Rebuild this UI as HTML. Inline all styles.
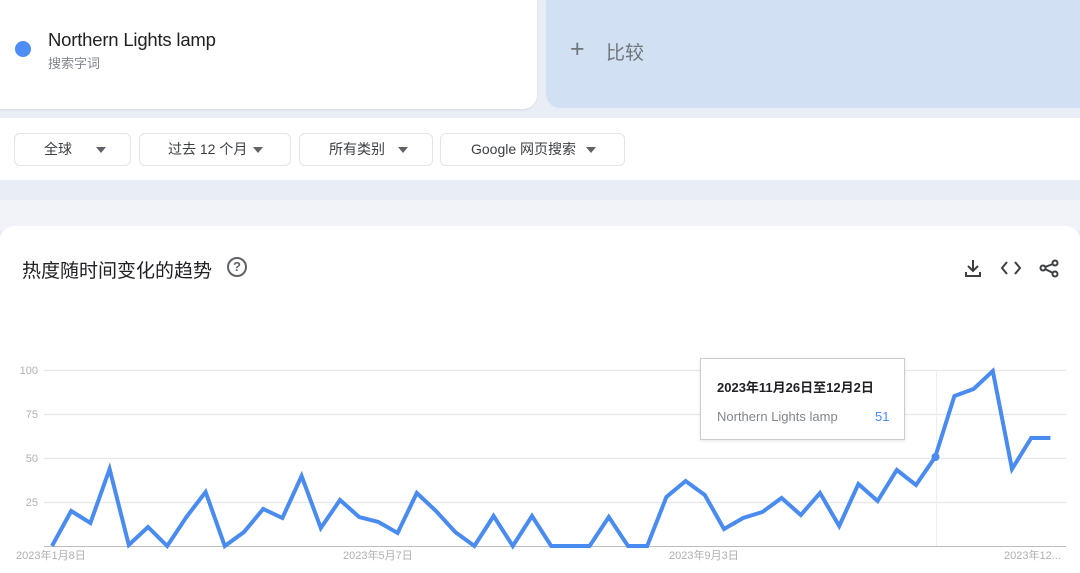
<!DOCTYPE html>
<html><head><meta charset="utf-8"><style>
*{margin:0;padding:0;box-sizing:border-box}
body{width:1080px;height:573px;overflow:hidden;background:#e9edf5;font-family:"Liberation Sans","Noto Sans CJK SC",sans-serif;position:relative}
.abs{position:absolute}
.card1{left:0;top:0;width:537px;height:109px;background:#fff;border-radius:0 0 14px 0;box-shadow:0 1px 2px rgba(0,0,0,.08)}
.cmp{left:546px;top:0;width:534px;height:108px;background:#d2e0f3;border-radius:0 0 0 14px}
.bar{left:0;top:118px;width:1080px;height:62px;background:#fff}
.btn{top:133px;height:33px;border:1px solid #e2e4e8;border-radius:6px;background:#fff;font-size:14px;color:#3c4043;line-height:31px}
.arr{position:absolute;top:13px;width:0;height:0;border-left:5px solid transparent;border-right:5px solid transparent;border-top:6px solid #5f6368}
.band{left:0;top:200px;width:1080px;height:30px;background:#f1f3f8}
.card2{left:0;top:226px;width:1080px;height:347px;background:#fff;border-radius:14px 14px 0 0}
</style></head><body>
<div class="abs card1"></div>
<div class="abs" style="left:15px;top:41px;width:16px;height:16px;border-radius:50%;background:#4e8df5"></div>
<div class="abs" style="left:48px;top:29px;font-size:18.5px;color:#202124;letter-spacing:-0.2px">Northern Lights lamp</div>
<div class="abs" style="left:48px;top:53px;font-size:13px;color:#80868b">搜索字词</div>
<div class="abs cmp"></div>
<div class="abs" style="left:570px;top:35px;font-size:25px;color:#70757a;font-weight:300">+</div>
<div class="abs" style="left:606px;top:38px;font-size:19px;color:#70757a">比较</div>
<div class="abs bar"></div>
<div class="abs btn" style="left:14px;width:117px"><span style="position:absolute;left:29px">全球</span><i class="arr" style="left:81px"></i></div>
<div class="abs btn" style="left:139px;width:152px"><span style="position:absolute;left:28px">过去 12 个月</span><i class="arr" style="left:113px"></i></div>
<div class="abs btn" style="left:299px;width:134px"><span style="position:absolute;left:29px">所有类别</span><i class="arr" style="left:98px"></i></div>
<div class="abs btn" style="left:440px;width:185px"><span style="position:absolute;left:30px">Google 网页搜索</span><i class="arr" style="left:145px"></i></div>
<div class="abs band"></div>
<div class="abs card2"></div>
<div class="abs" style="left:22px;top:256px;font-size:19px;color:#202124">热度随时间变化的趋势</div>
<div class="abs" style="left:227px;top:257px;width:20px;height:20px;border:2px solid #5f6368;border-radius:50%;font-size:13px;font-weight:bold;color:#5f6368;text-align:center;line-height:16px">?</div>
<svg class="abs" style="left:960px;top:255px" width="100" height="26" viewBox="0 0 100 26">
<g fill="none" stroke="#3c4043" stroke-width="2">
<path d="M13 5v11M8 11l5 5 5-5M6 17v4h14v-4"/>
<path d="M47 7l-5 6 5 6M55 7l5 6-5 6"/>
<circle cx="95" cy="8" r="2.5"/><circle cx="83" cy="13" r="2.5"/><circle cx="95" cy="19" r="2.5"/><path d="M85 12l8-3M85 14l8 4"/>
</g></svg>
<svg class="abs" style="left:0;top:0" width="1080" height="573">
<g stroke="#e8e8e8" stroke-width="1.2">
<line x1="44" y1="370.5" x2="1066" y2="370.5"/><line x1="44" y1="414.5" x2="1066" y2="414.5"/><line x1="44" y1="458.5" x2="1066" y2="458.5"/><line x1="44" y1="502.5" x2="1066" y2="502.5"/>
<line x1="936.5" y1="370" x2="936.5" y2="546" stroke="#eee"/>
</g>
<line x1="44" y1="546.5" x2="1066" y2="546.5" stroke="#bdbdbd" stroke-width="1"/>
<g font-family="Liberation Sans,Noto Sans CJK SC,sans-serif" font-size="11" fill="#b0b0b0" text-anchor="end">
<text x="38" y="374">100</text><text x="38" y="418">75</text><text x="38" y="462">50</text><text x="38" y="506">25</text>
</g>
<g font-family="Liberation Sans,Noto Sans CJK SC,sans-serif" font-size="11" fill="#b0b0b0">
<text x="16" y="559">2023年1月8日</text><text x="343" y="559">2023年5月7日</text><text x="669" y="559">2023年9月3日</text><text x="1004" y="559">2023年12...</text>
</g>
<polyline fill="none" stroke="#4a8bef" stroke-width="4" stroke-linejoin="miter" points="52,546 71.2,511 90.4,523 109.6,469 128.8,545 148,527 167.2,546 186.4,517 205.6,492 224.8,546 244,532 263.2,509 282.4,518 301.6,476 320.8,528 340,500 359.2,517 378.4,522 397.6,533 416.8,493 436,511 455.2,532 474.4,546 493.6,516 512.8,546 532,516 551.2,546 570.4,546 589.6,546 608.8,517 628,546 647.2,546 666.4,497 685.6,481 704.8,495 724,529 743.2,518 762.4,512 781.6,498 800.8,515 820,493 839.2,526 858.4,484 877.6,501 896.8,470 916,485 935.2,457 954.4,396 973.6,389 992.8,371 1012,469 1031.2,438 1050.4,438"/>
<circle cx="935.5" cy="457" r="4" fill="#4a8bef"/>
</svg>
<div class="abs" style="left:700px;top:358px;width:205px;height:82px;background:#fff;border:1px solid #ccc;box-shadow:0 1px 3px rgba(0,0,0,.1)">
<div style="position:absolute;left:16px;top:18px;font-size:13px;color:#202124;font-weight:bold;font-family:'Liberation Sans','Noto Sans CJK SC',sans-serif">2023年11月26日至12月2日</div>
<div style="position:absolute;left:16px;top:50px;font-size:13px;color:#80868b">Northern Lights lamp</div>
<div style="position:absolute;left:174px;top:50px;font-size:13px;color:#4a8bef">51</div>
</div>
</body></html>
